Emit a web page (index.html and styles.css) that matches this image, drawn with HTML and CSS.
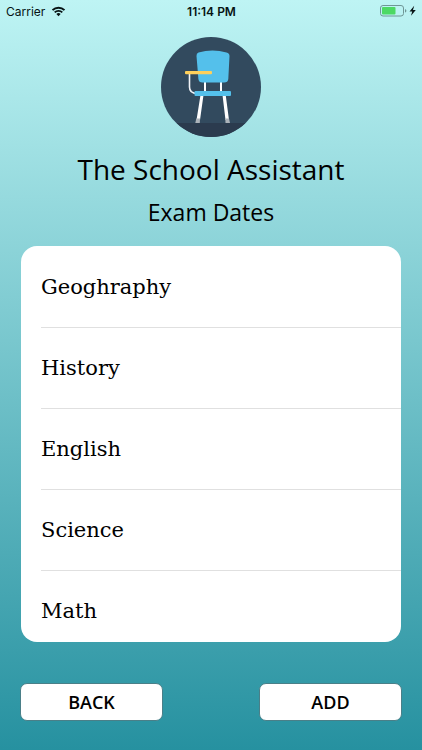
FILE: index.html
```html
<!DOCTYPE html>
<html lang="en">
<head>
    <meta charset="UTF-8">
    <meta name="viewport" content="width=device-width, initial-scale=1.0">
    <title>The School Assistant</title>
    <link rel="stylesheet" href="styles.css">
</head>
<body>
    <!-- Status bar -->
    <div class="status-bar">
        <div class="carrier">
            <span>Carrier</span>
            <svg width="15" height="11" viewBox="0 0 14 11" aria-hidden="true">
                <path d="M1 4.1 A8.6 8.6 0 0 1 13 4.1" fill="none" stroke="#071314" stroke-width="2"/>
                <path d="M3.2 6.4 A5.4 5.4 0 0 1 10.8 6.4" fill="none" stroke="#071314" stroke-width="1.8"/>
                <path d="M4.9 8.1 A3 3 0 0 1 9.1 8.1 L7 10.3 Z" fill="#071314"/>
            </svg>
        </div>
        <div class="time">11:14 PM</div>
        <div class="battery">
            <svg width="37" height="12" viewBox="0 0 37 12" aria-hidden="true">
                <rect x="0.5" y="0.5" width="23" height="10.5" rx="2.5" fill="none" stroke="#6f9696"/>
                <rect x="2" y="2" width="13.5" height="7.5" rx="1" fill="#4cd964"/>
                <path d="M25 4 Q26.4 4.4 26.4 5.8 Q26.4 7.2 25 7.6 Z" fill="#6f9696"/>
                <path d="M34.2 0.8 L29.5 6.5 H32.2 L31 10.8 L35.8 5 H33 Z" fill="#071314"/>
            </svg>
        </div>
    </div>

    <!-- Logo and titles -->
    <header class="header">
        <svg class="logo" viewBox="0 0 100 100" role="img" aria-label="School chair">
            <defs>
                <clipPath id="circle"><circle cx="50" cy="50" r="50"/></clipPath>
            </defs>
            <g clip-path="url(#circle)">
                <rect width="100" height="100" fill="#324a5e"/>
                <rect y="86" width="100" height="14" fill="#2b3b4e"/>
            </g>
            <!-- Supports and legs -->
            <path d="M44 44 V57 M60 44 V57" stroke="#fff" stroke-width="2" fill="none"/>
            <path d="M28.5 36 V50 Q28.5 56.5 36 56.5" stroke="#f1f3f7" stroke-width="1.6" fill="none"/>
            <path d="M39.5 58 H42.5 L39 83 H35.5 Z M61.5 58 H64.7 L68 83 H64.5 Z" fill="#fff"/>
            <path d="M35.3 81.5 H39 L38.8 86 H34.3 Z M64.3 81.5 H68 L69 86 H64.5 Z" fill="#acb3ba"/>
            <!-- Back, seat and desk -->
            <path d="M37.5 15.5 Q51.5 11.5 65.5 15.5 Q68.5 16.3 68.5 19 L67.3 42 Q67 45.5 63 45.5 H41.5 Q37.8 45.5 37.4 42 L35.5 19 Q35.3 16.2 37.5 15.5 Z" fill="#54c0eb"/>
            <rect x="33.5" y="54" width="36.5" height="5" rx="1" fill="#54c0eb"/>
            <rect x="24" y="34" width="27" height="3.2" rx="1" fill="#ffd05b"/>
        </svg>
        <h1>The School Assistant</h1>
        <h2>Exam Dates</h2>
    </header>

    <!-- Subjects list -->
    <ul class="subjects">
        <li>Geoghraphy</li>
        <li>History</li>
        <li>English</li>
        <li>Science</li>
        <li>Math</li>
    </ul>

    <!-- Bottom buttons -->
    <div class="actions">
        <button type="button">BACK</button>
        <button type="button">ADD</button>
    </div>
</body>
</html>
```
FILE: styles.css
```css
* {
    box-sizing: border-box;
}

body {
    display: flex;
    flex-direction: column;
    height: 100vh;
    margin: 0;
    background: linear-gradient(#bef4f4, #2691a0);
    color: #071314;
    font-family: "Open Sans", "Noto Sans", sans-serif;
}

/* Status bar */
.status-bar {
    display: grid;
    grid-template-columns: 1fr auto 1fr;
    align-items: center;
    height: 22px;
    padding: 0 5px 0 6px;
    font-family: Inter, "Liberation Sans", sans-serif;
    font-size: 12px;
}

.carrier {
    display: flex;
    align-items: center;
    gap: 6px;
}

.time {
    font-weight: 600;
}

.battery {
    display: flex;
    justify-content: flex-end;
}

/* Logo and titles */
.header {
    display: flex;
    flex-direction: column;
    align-items: center;
    padding: 15px 20px 16px;
}

.logo {
    width: 100px;
    height: 100px;
}

h1,
h2 {
    margin: 0;
    color: #000;
    font-weight: 400;
    text-align: center;
}

h1 {
    margin-top: 10px;
    font-size: 28px;
    line-height: 44px;
}

h2 {
    margin-top: 3px;
    font-size: 23px;
    line-height: 36px;
}

/* Subjects list */
.subjects {
    flex: 1;
    min-height: 0;
    margin: 0 21px;
    padding: 1px 0 0 20px;
    overflow: hidden;
    background-color: #fff;
    border-radius: 16px;
    color: #000;
    font-family: "DejaVu Serif", serif;
    font-size: 21px;
    list-style: none;
}

.subjects li {
    display: flex;
    align-items: center;
    height: 81px;
    border-bottom: 1px solid #e0e0e0;
}

/* Bottom buttons */
.actions {
    display: flex;
    justify-content: space-between;
    padding: 41px 20px 29px;
}

button {
    width: 143px;
    height: 38px;
    padding: 0;
    background-color: #fff;
    border: 1px solid #4a7f88;
    border-radius: 7px;
    color: #000;
    font-family: "Open Sans", "Noto Sans", sans-serif;
    font-size: 18px;
    font-weight: 600;
    cursor: pointer;
}
```
